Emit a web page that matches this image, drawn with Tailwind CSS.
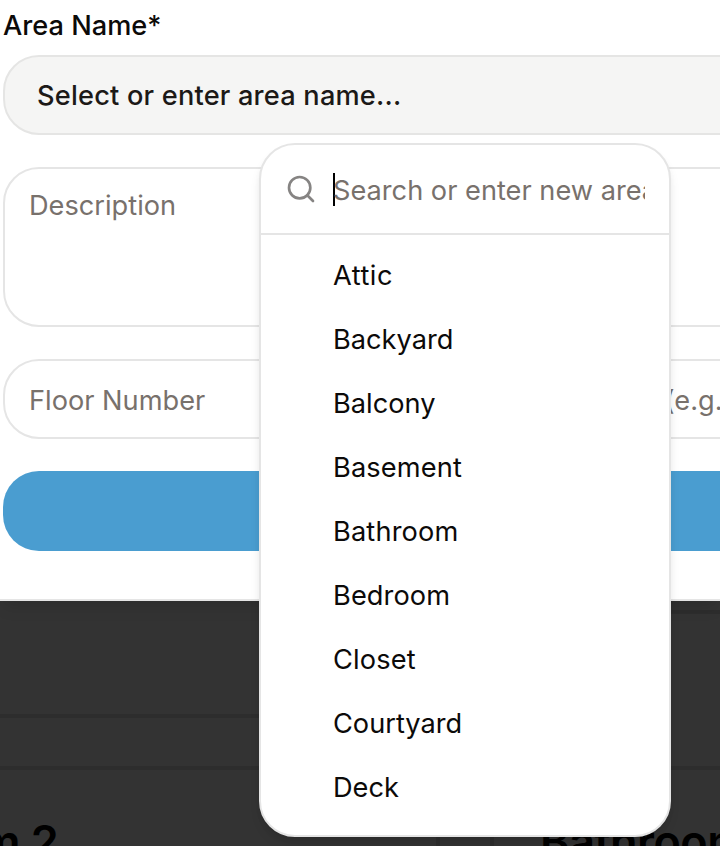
<!DOCTYPE html>
<html lang="en">
<head>
<meta charset="utf-8">
<title>Add area</title>
<script src="https://cdn.jsdelivr.net/npm/@tailwindcss/browser@4"></script>
</head>
<body class="relative h-[846px] w-[720px] overflow-hidden bg-[#333333] font-['Inter',sans-serif] text-[27.2px] leading-10 text-[#0c0a09]">
  <!-- Dimmed page behind the dialog -->
  <div class="flex h-full flex-col overflow-hidden pt-[610px]">
    <div class="flex h-[108px] shrink-0 flex-col justify-between">
      <div class="ml-[600px] h-1 bg-[#2d2d2d]"></div>
      <div class="mr-[400px] h-1 bg-[#2d2d2d]"></div>
    </div>
    <div class="mt-12 flex h-20 shrink-0 justify-between border-t-4 border-[#2d2d2d]">
      <div class="w-[440px] border-r-4 border-[#2d2d2d] pt-[42px]"><div class="-ml-[20px] text-[45px] leading-[60px] font-semibold tracking-[-0.5px] whitespace-nowrap text-black">m 2</div></div>
      <div class="w-[230px] border-l-4 border-[#2d2d2d] pt-[42px] pl-[46px]"><div class="text-[45px] leading-[60px] font-semibold tracking-[-0.5px] whitespace-nowrap text-black">Bathroom</div></div>
    </div>
  </div>

  <!-- Dialog -->
  <main class="absolute top-0 left-0 flex h-[601px] w-[720px] flex-col overflow-x-clip border-b-2 border-[#e5e5e5] bg-white pt-[6px] pl-[3px] shadow-[0_8px_16px_-4px_rgba(0,0,0,0.15)]">
    <label class="font-medium">Area Name*</label>
    <button class="-mr-10 mt-[9px] h-20 shrink-0 rounded-[36px] border-2 border-[#e5e5e4] bg-[#f5f5f4] px-8 pt-px text-left font-medium tracking-[0.2px] text-[#1c1917]">Select or enter area name...</button>
    <div class="-mr-10 mt-8 h-40 shrink-0 rounded-[36px] border-2 border-[#e5e5e5] px-6 pt-[17px] text-[#78716c]">Description</div>
    <div class="-mr-10 mt-8 grid h-20 shrink-0 grid-cols-2 gap-8 text-[#78716c]">
      <div class="flex items-center rounded-[36px] border-2 border-[#e5e5e5] px-6 pt-1">Floor Number</div>
      <div class="-mr-40 flex items-center rounded-[36px] border-2 border-[#e5e5e5] pt-1 pl-[109px] whitespace-nowrap">Floor Name (e.g.</div>
    </div>
    <div class="-mr-10 mt-8 h-20 shrink-0 rounded-[36px] bg-[#4a9dd0]"></div>
  </main>

  <!-- Area picker -->
  <section class="absolute top-[143px] left-[259px] flex h-[694px] w-[412px] flex-col rounded-[36px] border-2 border-[#e5e5e5] bg-white shadow-[0_8px_12px_-2px_rgba(0,0,0,0.1),0_4px_8px_-4px_rgba(0,0,0,0.1)]">
    <div class="flex h-[90px] shrink-0 items-center border-b-2 border-[#e5e5e5] px-6">
      <svg class="mr-4 size-8 shrink-0" viewBox="0 0 24 24" fill="none" stroke="#868483" stroke-width="2" stroke-linecap="round" stroke-linejoin="round"><circle cx="11" cy="11" r="8"/><path d="m21 21-4.3-4.3"/></svg>
      <div class="flex min-w-0 flex-1 items-center overflow-hidden pt-0.5 whitespace-nowrap text-[#78716c]"><span class="-mr-0.5 mb-0.5 h-[33px] w-0.5 shrink-0 bg-black"></span><span class="pt-0.5">Search or enter new area name...</span></div>
    </div>
    <ul class="pt-[9px] pl-[72px]">
      <li class="flex h-16 items-center tracking-[0.5px]">Attic</li>
      <li class="flex h-16 items-center">Backyard</li>
      <li class="flex h-16 items-center">Balcony</li>
      <li class="flex h-16 items-center tracking-[0.15px]">Basement</li>
      <li class="flex h-16 items-center tracking-[0.15px]">Bathroom</li>
      <li class="flex h-16 items-center tracking-[0.1px]">Bedroom</li>
      <li class="flex h-16 items-center tracking-[0.15px]">Closet</li>
      <li class="flex h-16 items-center">Courtyard</li>
      <li class="flex h-16 items-center">Deck</li>
    </ul>
  </section>
</body>
</html>
